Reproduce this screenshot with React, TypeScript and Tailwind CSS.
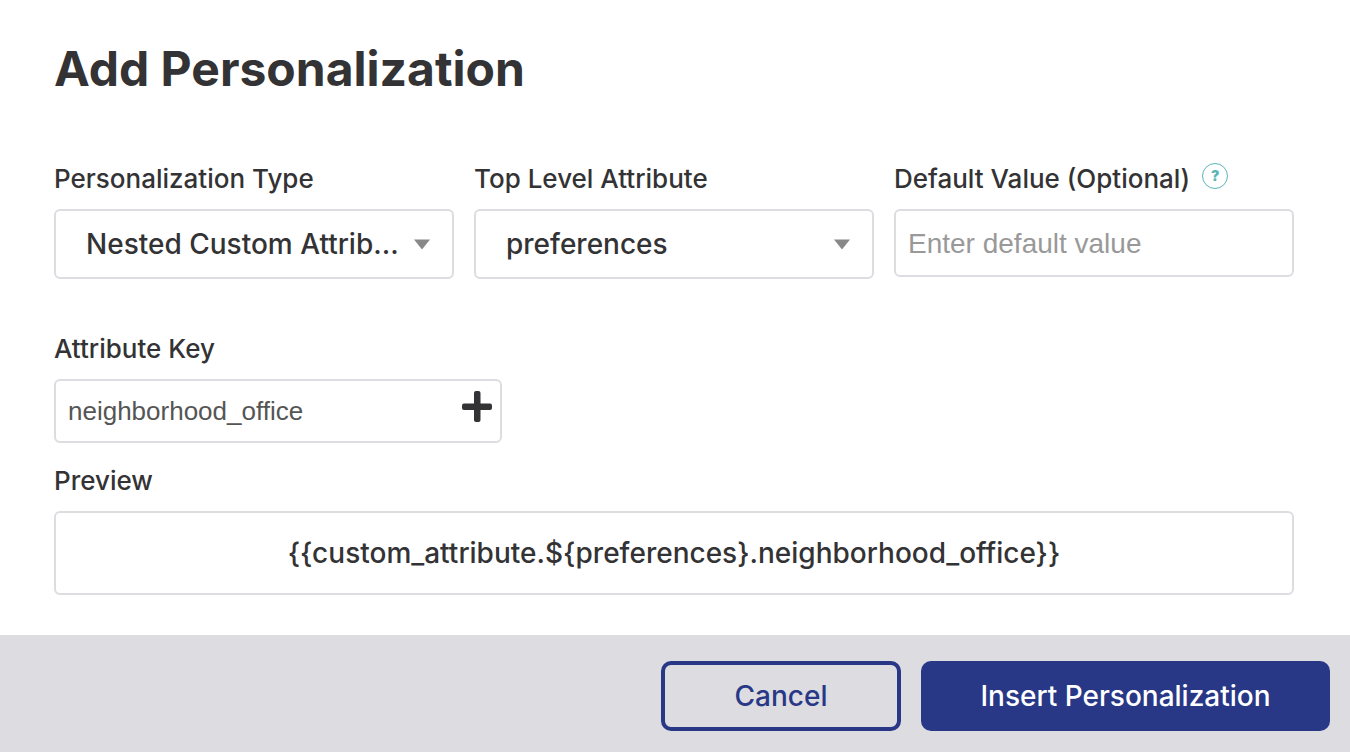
import { useState } from "react";

const labelClass = "text-[26px] leading-8 font-medium text-[#333335]";
const boxClass = "w-full rounded-md border-2 border-[#dddce1] bg-white";

type SelectFieldProps = {
    id: string;
    label: string;
    options: string[];
}

function SelectField({ id, label, options }: SelectFieldProps) {
    const [value, setValue] = useState(options[0]);

    return (
        <div className="min-w-0">
            <label htmlFor={id} className={`block ${labelClass}`}>{label}</label>
            <div className="relative mt-[14px]">
                <select
                    id={id}
                    value={value}
                    onChange={(e) => setValue(e.target.value)}
                    className={`block h-[70px] appearance-none truncate pl-[30px] pr-[50px] text-[28px] font-medium text-[#333335] ${boxClass}`}
                >
                    {options.map((option) => (
                        <option key={option}>{option}</option>
                    ))}
                </select>
                <svg className="pointer-events-none absolute right-6 top-[30px] h-[11px] w-4" viewBox="0 0 16 11" aria-hidden="true">
                    <path d="M0 .5h16L8 10.5z" fill="#888" />
                </svg>
            </div>
        </div>
    )
}

export default function App() {
    const [defaultValue, setDefaultValue] = useState("");
    const [attributeKey, setAttributeKey] = useState("neighborhood_office");

    return (
        <form className="min-h-screen bg-white font-['Inter',sans-serif] text-[#333335]" onSubmit={(e) => e.preventDefault()}>
            <div className="pl-[54px] pr-14 pt-10 pb-10">
                <h1 className="text-5xl leading-[58px] font-bold">Add Personalization</h1>

                <div className="mt-[65px] grid grid-cols-3 gap-5">
                    <SelectField id="type" label="Personalization Type" options={["Nested Custom Attribute", "Custom Attribute"]} />
                    <SelectField id="attribute" label="Top Level Attribute" options={["preferences"]} />
                    <div className="min-w-0">
                        <div className="flex gap-3">
                            <label htmlFor="default" className={`whitespace-nowrap ${labelClass}`}>Default Value (Optional)</label>
                            <button type="button" aria-label="Help" className="h-[26px] w-[26px] rounded-full border border-[#5bb5b5] text-sm leading-6 font-black text-[#5bb5b5]">?</button>
                        </div>
                        <input
                            id="default"
                            value={defaultValue}
                            onChange={(e) => setDefaultValue(e.target.value)}
                            placeholder="Enter default value"
                            className={`mt-[14px] block h-[68px] px-3 pt-0.5 font-['Liberation_Sans',sans-serif] text-[28px] placeholder:text-[#999] ${boxClass}`}
                        />
                    </div>
                </div>

                <div className="mt-[54px] w-[448px]">
                    <label htmlFor="key" className={`block ${labelClass}`}>Attribute Key</label>
                    <div className="relative mt-[14px]">
                        <input
                            id="key"
                            value={attributeKey}
                            onChange={(e) => setAttributeKey(e.target.value)}
                            className={`block h-16 pl-3 pr-14 font-['Liberation_Sans',sans-serif] text-[26px] text-[#555] ${boxClass}`}
                        />
                        <button type="button" aria-label="Add key" className="absolute right-[10px] top-3">
                            <svg className="h-8 w-[30px]" viewBox="0 0 30 32" aria-hidden="true">
                                <rect x="12" y="0" width="6.5" height="31" rx="2" fill="#333335" />
                                <rect x="0" y="12.5" width="30" height="6.5" rx="2" fill="#333335" />
                            </svg>
                        </button>
                    </div>
                </div>

                <h2 className={`mt-[22px] ${labelClass}`}>Preview</h2>
                <div className={`mt-[14px] flex h-[84px] items-center justify-center text-[28px] font-medium ${boxClass}`}>
                    {`{{custom_attribute.\${preferences}.${attributeKey}}}`}
                </div>
            </div>

            <div className="flex justify-end gap-5 bg-[#dddce1] px-5 pt-[26px] pb-[21px]">
                <button type="button" className="h-[70px] w-60 rounded-[10px] border-4 border-[#283887] text-[28px] font-medium text-[#283887]">Cancel</button>
                <button type="submit" className="h-[70px] w-[409px] rounded-[10px] bg-[#283887] text-[28px] font-medium text-white">Insert Personalization</button>
            </div>
        </form>
    )
}
